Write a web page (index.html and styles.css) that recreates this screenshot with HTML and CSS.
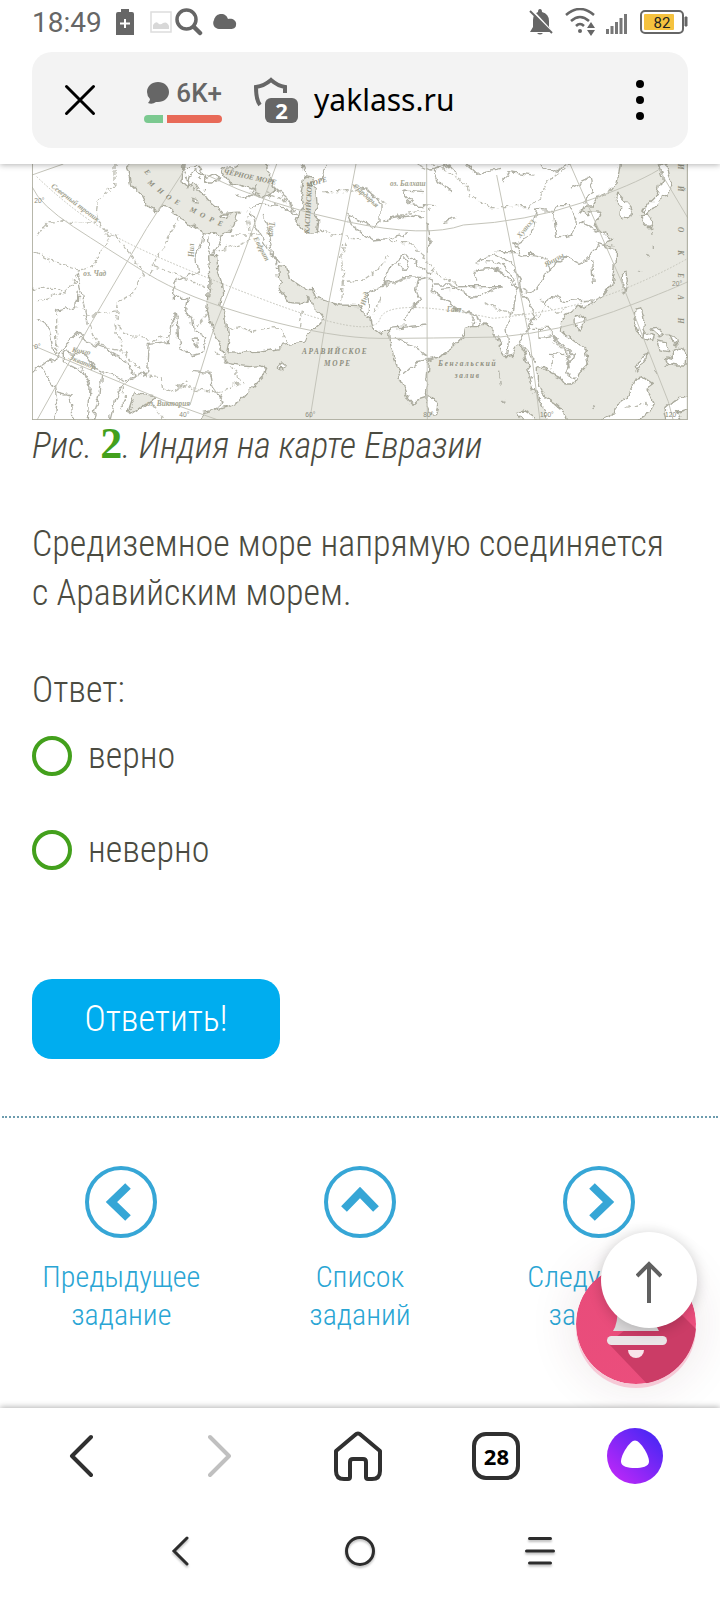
FILE: index.html
```html
<!DOCTYPE html>
<html lang="ru">
<head>
    <meta charset="UTF-8">
    <meta name="viewport" content="width=device-width, initial-scale=1">
    <title>ЯКласс</title>
    <link rel="stylesheet" href="styles.css">
</head>
<body>
    <header class="top">
        <div class="status">
            <span class="time">18:49</span>
            <svg class="st-battery-plus" width="18" height="26" viewBox="0 0 18 26"><path d="M5 0h8v3h3q2 0 2 2v21H0V5q0-2 2-2h3z" fill="#666"/><path d="M9 10v9M4 14.500h10" stroke="#fff" stroke-width="2"/></svg>
            <svg class="st-image" width="22" height="22" viewBox="0 0 22 22"><path d="M1 1h20v20H1z" fill="none" stroke="#ddd" stroke-width="1.500"/><path d="M3 18v-4q3-5 6-1 2 1 4-1 4-2 6 3v3z" fill="#d8d8d8"/></svg>
            <svg class="st-search" width="28" height="28" viewBox="0 0 28 28" fill="none" stroke="#666"><circle cx="11.500" cy="11.500" r="9.500" stroke-width="3.500"/><path d="M19 19l6 6" stroke-width="4.500" stroke-linecap="round"/></svg>
            <svg class="st-cloud" width="24" height="16" viewBox="0 0 24 16"><path d="M6 15a6 6 0 0 1-5-9C2 2 5 0 8 0c4 0 6 2 7 5 5-1 9 2 8 6 0 3-3 4-5 4z" fill="#666"/></svg>
            <span class="spacer"></span>
            <svg width="24" height="26" viewBox="0 0 24 26"><path d="M11 0q2 0 2 3 7 2 7 9v6l3 5H1l3-5v-7q0-6 5-8 0-3 2-3z" fill="#666"/><path d="M8 24h6q-3 3-6 0z" fill="#666"/><path d="M2 0l22 24" stroke="#fff" stroke-width="2"/><path d="M1 2l22 22" stroke="#666" stroke-width="2"/></svg>
            <svg class="st-wifi" width="30" height="28" viewBox="0 0 30 28" fill="none" stroke="#666" stroke-width="2.500"><path d="M1 7q14-12 28 0M6 13q9-8 18 0M11 18q4-4 8 0"/><circle cx="15" cy="23" r="2" fill="#666" stroke="none"/><path d="M26 14l4 6h-8zM26 28l4-6h-8z" fill="#666" stroke="none"/></svg>
            <svg class="st-signal" width="22" height="20" viewBox="0 0 22 20" stroke="#777" stroke-width="3"><path d="M1.500 20v-5M6 20v-8M10.500 20V8M15 20V4M19.500 20V0"/></svg>
            <svg class="st-charge" width="48" height="25" viewBox="0 0 48 25"><rect x="1" y="1" width="42" height="22" rx="4" fill="#fff" stroke="#666" stroke-width="2"/><rect x="4" y="4" width="30" height="16" rx="1" fill="#f5c23e"/><path d="M45 7h2v9h-2z" fill="#666" stroke="#666"/><text x="22" y="18" text-anchor="middle" class="charge-text">82</text></svg>
        </div>
        <div class="address">
            <button class="icon-btn close-btn" aria-label="Закрыть">
                <svg width="32" height="32" viewBox="0 0 32 32"><path d="M2.500 2.500l27 27M29.500 2.500l-27 27" stroke="#000" stroke-width="3" stroke-linecap="round"/></svg>
            </button>
            <button class="icon-btn rating">
                <span class="rating-top">
                    <svg width="22" height="22" viewBox="0 0 22 22"><path d="M11 0C17 0 22 4 22 10s-5 10-11 10H9q-4 3-8 1 2-2 2-4Q0 14 0 10C0 4 5 0 11 0z" fill="#666"/></svg>
                    <span>6K+</span>
                </span>
                <span class="rating-bar"><span class="good"></span><span class="bad"></span></span>
            </button>
            <button class="icon-btn shield">
                <svg width="44" height="46" viewBox="0 0 44 46"><path d="M6 28Q2 23 2 10q8-1 15-7 7 6 14 7v6" fill="none" stroke="#666" stroke-width="4"/></svg>
                <span class="shield-count">2</span>
            </button>
            <a class="url" href="#">yaklass.ru</a>
            <button class="icon-btn more-btn" aria-label="Меню">
                <svg width="8" height="40" viewBox="0 0 8 40"><circle cx="4" cy="4" r="4"/><circle cx="4" cy="20" r="4"/><circle cx="4" cy="36" r="4"/></svg>
            </button>
        </div>
    </header>

    <main class="task">
        <figure class="figure">
            <svg class="map" viewBox="36 27 1968 768" role="img" aria-label="Индия на карте Евразии">
                <defs>
                    <!-- makes the coasts and borders uneven -->
                    <filter id="coast" filterUnits="userSpaceOnUse" x="0" y="0" width="2040" height="830">
                        <feTurbulence type="fractalNoise" baseFrequency="0.035" numOctaves="3" seed="4"/>
                        <feDisplacementMap in="SourceGraphic" scale="26" xChannelSelector="R" yChannelSelector="G"/>
                    </filter>
                </defs>
                <rect x="36" y="27" width="1968" height="768" fill="#fff"/>

                <g filter="url(#coast)">
                <!-- seas -->
                <g class="sea">
                    <path d="M536 820L536 797 552 772 620 757 660 737 696 698 722 674 738 658 742 640 722 632 690 635 660 632 628 625 613 610 610 596 600 570 578 528 562 470 570 390 566 300 590 302 594 350 604 380 608 420 602 452 618 480 626 520 628 550 620 590 660 592 720 588 778 578 782 568 840 560 855 558 860 545 882 525 905 505 910 490 895 470 877 455 873 425 856 435 835 445 806 442 795 425 780 405 784 385 776 370 772 332 800 335 808 372 825 385 850 402 880 404 888 418 885 428 920 440 960 450 1022 452 1030 475 1050 485 1055 515 1085 538 1108 520 1112 570 1128 630 1150 690 1165 730 1180 747 1192 735 1215 728 1220 690 1225 620 1260 605 1290 585 1318 556 1333 542 1336 520 1350 515 1380 515 1395 500 1420 535 1436 555 1445 590 1455 605 1478 600 1485 575 1500 570 1515 600 1525 640 1535 690 1552 725 1570 755 1584 797 1584 820z"/>
                    <path d="M1640 820L1640 797 1630 770 1600 745 1575 730 1560 700 1552 680 1552 632 1570 635 1590 650 1620 665 1640 690 1655 690 1675 655 1705 625 1695 585 1665 560 1630 535 1618 525 1622 500 1640 475 1690 455 1735 435 1770 395 1780 370 1785 340 1787 285 1762 278 1755 262 1775 255 1740 230 1725 200 1742 172 1708 170 1700 182 1684 170 1695 150 1720 150 1740 122 1772 108 1790 85 1797 50 1804 5 2030 5 2030 820z"/>
                    <path d="M322 40L360 5 490 5 486 80 500 95 520 85 540 110 560 120 565 135 610 175 655 172 645 205 625 235 602 245 550 232 510 205 475 185 440 155 422 150 405 170 385 160 365 120 335 90 330 60z"/>
                    <path d="M605 50Q605 34 640 36L680 10 730 10 750 50 748 70 762 100 758 120 740 126 700 110 655 90 620 80z"/>
                    <path d="M850 70Q858 60 880 66L884 80 872 90 888 112 892 160 880 180 896 200 892 236 860 238 845 222 828 200 836 176 850 165 842 120z"/>
                    <path d="M345 712L400 722 395 735 330 778 325 770z"/>
                </g>

                <!-- islands and peninsulas -->
                <g class="land">
                    <path d="M1221 722L1235 725 1256 755 1250 775 1232 778 1222 755z"/>
                    <path d="M1790 118L1800 118 1825 145 1837 175 1822 185 1812 195 1800 180 1802 155 1785 140z"/>
                    <path d="M1915 30L1940 27 1948 60 1962 95 1945 120 1925 125 1918 150 1895 160 1875 178 1866 172 1885 145 1912 118 1918 90 1928 70z"/>
                    <path d="M1862 182L1880 180 1896 200 1888 220 1870 200z"/>
                    <path d="M1808 360L1818 358 1822 380 1815 410 1805 395z"/>
                    <path d="M1662 492L1690 482 1694 505 1678 522 1664 515z"/>
                    <path d="M1848 462L1865 458 1875 485 1872 520 1885 545 1870 555 1855 530 1845 500z"/>
                    <path d="M1876 530L1900 545 1895 562 1876 555zM1895 522L1920 520 1935 535 1915 540zM1908 555L1935 560 1945 590 1920 585zM1945 540L1965 550 1970 570 1950 560z"/>
                    <path d="M1960 590L1982 575 2000 600 1998 630 1970 630 1945 625 1940 605 1960 610z"/>
                    <path d="M1882 585L1878 610 1850 650 1846 640 1868 605z"/>
                    <path d="M1745 820L1745 797 1780 780 1790 750 1825 725 1850 670 1870 665 1900 685 1880 700 1905 745 1890 770 1860 790 1830 820z"/>
                    <path d="M1490 772L1515 768 1560 797 1560 820 1505 797z"/>
                    <path d="M1935 760L1965 735 2030 725 2030 750 1970 770 1990 820 1940 797z"/>
                    <path d="M778 636Q790 624 800 634 794 644 780 640zM600 182l24-3-8 12-14-2z"/>
                    <path d="M488 40L505 75 500 100 510 60 530 50 560 70 580 60 600 70 570 85 555 75 540 40z"/>
                    <path d="M512 130l18 4 4 10-14-2zM530 90l8 8M545 112l6 6M538 70l4 6M552 98l4 6M520 105l6 4"/>
                </g>

                <!-- borders -->
                <g class="border">
                    <path d="M285 27L285 85 235 135 230 170 240 205 85 200 45 250M240 205L270 245 220 330 175 345 100 320 36 285M270 245L290 240 370 355 340 415 295 440 290 480 285 510 340 545 410 555 445 540 470 480M180 480L230 480 290 470M36 400L100 400 130 410 160 385 175 350M60 440L90 430 130 410M110 470L110 600M210 510L230 570 310 590 380 660 420 665 425 700 450 710 500 680M475 190L390 355M405 335L560 395M590 590L670 680 590 715 460 690M560 480L520 525M630 520L660 515 690 530 720 525M285 510L310 600M310 700L310 760M400 750L440 797M590 290L690 255 680 170M630 240L720 240M740 110L790 130 830 170M900 225L950 240 1020 255M975 260L965 330 970 380 1030 375 1080 340 1105 300M970 380L965 440M1060 400L1110 390 1160 370M720 525L780 520 800 560M835 520L845 465M910 110L985 110 1030 100 1100 150M1090 200L1160 175 1230 165M1105 260L1160 260 1210 300 1240 350 1320 395 1440 395M1230 27L1300 60 1340 90 1350 120 1400 155 1530 155 1560 125 1580 80 1650 30M1400 440L1450 470 1510 480 1545 500 1580 450M1560 430L1600 470 1640 460M1080 425L1060 480M1600 560L1650 600 1650 640M1600 600L1590 640M1820 760L1880 745"/>
                </g>

                <!-- rivers and lakes -->
                <g class="river">
                    <path d="M550 232L545 265 530 300 535 350 465 380 460 430 505 430 500 460 515 490 520 530 560 545 550 590 515 600 480 580 475 540 470 480 450 500 445 560 385 565 380 650 310 690 285 730 270 790"/>
                    <path d="M565 245L560 280 575 300 610 245M36 655L80 620 110 610 130 580 175 535 195 560 260 585 330 625 345 665 320 675 230 640 200 600 130 590 130 620 190 650 210 700 205 797M60 640L100 690 110 750 105 797M245 650L240 720 215 797M110 710L150 720 160 797M175 350L180 400 205 510M45 490L90 520 105 600M105 470L170 455 175 410M520 650L570 655 575 690 610 740 580 770"/>
                    <path d="M690 160L720 150 790 155 830 180M690 170L720 240 750 290 780 320M730 180L745 230 750 270 772 325M650 120L680 130 700 115M762 100L800 130 820 170M850 27L865 65M920 27L905 65"/>
                    <path d="M1000 90L1040 100 1080 145 1080 200 1060 215 980 180M980 170L1000 215 1060 255 1110 250 1160 235M1090 195L1180 180 1215 190M1160 105L1150 120 1180 150 1240 155M1160 105L1210 110M1090 395L1110 330 1160 295 1190 330 1240 360M1140 320A14 14 0 1 0 1150 312M1045 475L1045 420 1090 390 1170 365 1230 370 1240 410 1310 460 1370 480 1380 520M1155 500L1160 470 1205 440 1190 400 1195 375 1225 370M1240 390L1290 390 1360 430 1440 395 1320 395 1260 400M1110 520L1220 510M1120 550L1180 575 1220 600M1150 655L1190 620 1250 610"/>
                    <path d="M1365 330Q1400 280 1450 310T1500 400L1545 480 1530 520M1370 345Q1420 325 1460 365T1520 430M1400 320Q1460 320 1490 390M1340 470L1360 485 1355 515M1490 400L1480 470 1460 500 1465 560 1460 600M1530 520L1500 540 1510 580 1550 620M1540 520L1580 520 1620 560 1660 600 1640 650 1660 670"/>
                    <path d="M1430 290L1490 290 1510 300 1485 265 1530 240 1550 165 1600 170 1610 250 1660 240 1670 190 1650 155 1610 155 1600 170M1680 200L1740 230M1510 300Q1580 290 1590 340L1540 415 1510 400M1590 340L1640 305 1680 325 1710 310 1735 260 1780 275M1715 315L1720 390M1570 445L1600 425 1640 440 1720 435M1650 100L1710 70 1720 110 1690 145M1590 595L1650 600M1560 520L1560 550 1600 545 1640 590 1650 640"/>
                    <path d="M1190 27L1230 45 1290 30 1310 60M1240 40L1260 90 1290 110M1340 27L1370 55 1440 40M1450 80L1470 50 1540 60M1560 30L1600 50 1640 30M1380 340l-15 15 5 25M500 70l15 30M1225 205L1230 260 1215 290M1270 200L1310 190M710 85L690 115"/>
                    <path d="M520 560l8-6 6 10-8 8zM618 516l4 2M1828 180l4 4M1895 230l1 10M1894 265l0 14M1890 300l-2 8M1855 350l8-6M1436 650l2 20M1436 685l2 10M1450 735l6 8M1530 655l6 12M1610 665l14 6M1716 755l6 3M1905 655l4 4M1900 650l6 8M1930 640l14-10"/>
                </g>
                </g>

                <!-- graticule -->
                <g class="grid">
                    <path d="M36 60L130 27M36 95Q60 150 160 215T380 355T720 490T1080 550T1440 546Q1620 530 1780 470T2004 380"/>
                    <path d="M490 50L380 220 210 510 50 797M36 570L200 640 440 740 600 797"/>
                    <path d="M770 27L660 325 580 525 510 750M1008 27L975 200 925 450 870 790M1220 27L1222 797"/>
                    <path d="M560 60Q740 150 980 200T1330 210Q1520 200 1680 145T1915 45M1430 60L1530 560 1560 797M1650 27L1800 370 1945 740 1960 797M1915 40L2004 190"/>
                    <path d="M50 65Q160 170 270 235T720 430T1080 492T1420 490Q1620 470 1750 425T2004 310" class="dots"/>
                </g>

                <g class="map-text">
                    <text x="92" y="96" transform="rotate(37 92 96)">Северный тропик</text>
                    <text x="190" y="362">оз. Чад</text>
                    <text x="155" y="590" transform="rotate(10 155 590)">Конго</text>
                    <text x="145" y="612" transform="rotate(22 145 612)">Экватор</text>
                    <text x="380" y="754">оз. Виктория</text>
                    <text x="522" y="306" transform="rotate(-90 522 306)">Нил</text>
                    <text x="700" y="250" transform="rotate(62 700 250)">Евфрат</text>
                    <text x="748" y="200" transform="rotate(90 748 200)">Тигр</text>
                    <text x="998" y="95" transform="rotate(42 998 95)">Сырдарья</text>
                    <text x="1110" y="92">оз. Балхаш</text>
                    <text x="1035" y="452" transform="rotate(-75 1035 452)">Инд</text>
                    <text x="1280" y="472">Ганг</text>
                    <text x="1500" y="250" transform="rotate(-50 1500 250)">Хуанхэ</text>
                    <text x="1578" y="336" transform="rotate(-30 1578 336)">Янцзы</text>
                    <text x="43" y="145" class="deg">20°</text>
                    <text x="43" y="583" class="deg">0°</text>
                    <text x="478" y="786" class="deg">40°</text>
                    <text x="856" y="786" class="deg">60°</text>
                    <text x="1210" y="786" class="deg">80°</text>
                    <text x="1560" y="786" class="deg">100°</text>
                    <text x="1935" y="786" class="deg">120°</text>
                    <text x="1956" y="394" class="deg">20°</text>
                </g>
                <g class="sea-text">
                    <text x="846" y="597" class="wide">АРАВИЙСКОЕ</text>
                    <text x="912" y="634" class="wide">МОРЕ</text>
                    <text x="1255" y="633" class="wide">Бенгальский</text>
                    <text x="1304" y="669" class="wide">залив</text>
                    <text x="610" y="56" transform="rotate(12 610 56)">ЧЁРНОЕ МОРЕ</text>
                    <text x="868" y="236" transform="rotate(-87 868 236)">КАСПИЙСКОЕ</text>
                    <text x="862" y="98" transform="rotate(-18 862 98)">МОРЕ</text>
                    <text transform="translate(372 50) rotate(50)">Е</text>
                    <text transform="translate(382 84) rotate(42)">М</text>
                    <text transform="translate(410 108) rotate(38)">Н</text>
                    <text transform="translate(436 128) rotate(32)">О</text>
                    <text transform="translate(462 144) rotate(28)">Е</text>
                    <text transform="translate(508 168) rotate(24)">М</text>
                    <text transform="translate(538 184) rotate(22)">О</text>
                    <text transform="translate(566 198) rotate(20)">Р</text>
                    <text transform="translate(592 210) rotate(18)">Е</text>
                    <text transform="translate(1974 26) rotate(90)">И</text>
                    <text transform="translate(1974 92) rotate(90)">Й</text>
                    <text transform="translate(1974 216) rotate(90)">О</text>
                    <text transform="translate(1974 286) rotate(90)">К</text>
                    <text transform="translate(1974 354) rotate(90)">Е</text>
                    <text transform="translate(1974 420) rotate(90)">А</text>
                    <text transform="translate(1974 488) rotate(90)">Н</text>
                </g>
                <rect x="37" y="25" width="1965" height="769" fill="none" stroke="#a9a99b" stroke-width="3"/>
            </svg>
            <figcaption>Рис. <span class="num">2</span>. Индия на карте Евразии</figcaption>
        </figure>

        <p class="question">Средиземное море напрямую соединяется с&nbsp;Аравийским морем.</p>

        <form class="answers">
            <p class="answers-title">Ответ:</p>
            <label class="option"><input type="radio" name="answer" value="1"><span>верно</span></label>
            <label class="option"><input type="radio" name="answer" value="0"><span>неверно</span></label>
            <button type="button" class="submit-btn">Ответить!</button>
        </form>
    </main>

    <nav class="task-nav">
        <a href="#">
            <svg width="72" height="72" viewBox="0 0 72 72"><circle cx="36" cy="36" r="34"/><path d="M43 20L26.500 36 43 52"/></svg>
            <span>Предыдущее задание</span>
        </a>
        <a href="#">
            <svg width="72" height="72" viewBox="0 0 72 72"><circle cx="36" cy="36" r="34"/><path d="M20 43L36 26.500 52 43"/></svg>
            <span>Список заданий</span>
        </a>
        <a href="#">
            <svg width="72" height="72" viewBox="0 0 72 72"><circle cx="36" cy="36" r="34"/><path d="M29 20L45.500 36 29 52"/></svg>
            <span>Следующее задание</span>
        </a>
        <button class="bell-btn" aria-label="Уведомления">
            <svg width="120" height="120" viewBox="0 0 120 120">
                <defs>
                    <linearGradient id="pink" x1="0" y1="0" x2="1" y2="1"><stop offset="0" stop-color="#e84c7a"/><stop offset="1" stop-color="#ec4e7d"/></linearGradient>
                    <clipPath id="round"><circle cx="60" cy="60" r="60"/></clipPath>
                </defs>
                <g clip-path="url(#round)">
                    <circle cx="60" cy="60" r="60" fill="url(#pink)"/>
                    <path d="M32 79L75 124 130 124 130 75 90 35z" fill="#cb3c66"/>
                </g>
                <path d="M37 67Q42 60 42 40a18 18 0 0 1 36 0q0 20 5 27z" fill="#dcdadb"/>
                <rect x="31" y="72" width="60" height="9" rx="4.500" fill="#eae5e7"/>
                <path d="M52 86h16a8 8 0 0 1-16 0z" fill="#f8e4ea"/>
            </svg>
        </button>
        <button class="up-btn" aria-label="Наверх">
            <svg width="26" height="42" viewBox="0 0 26 42" fill="none" stroke="#606060" stroke-width="4"><path d="M13 42V3M1 15L13 3l12 12"/></svg>
        </button>
    </nav>

    <footer class="bottom">
        <div class="browser-bar">
            <button class="icon-btn" aria-label="Назад"><svg width="24" height="44" viewBox="0 0 24 44"><path d="M22 3L3 22l19 19" class="line"/></svg></button>
            <button class="icon-btn" aria-label="Вперёд" disabled><svg width="24" height="44" viewBox="0 0 24 44"><path d="M2 3l19 19L2 41" class="line pale"/></svg></button>
            <button class="icon-btn" aria-label="Домой"><svg width="48" height="50" viewBox="0 0 48 50"><path d="M2 20L21 4q3-3 6 0l19 16v20q0 8-8 8h-4q-2 0-2-2V31q0-3-3-3h-10q-3 0-3 3v15q0 2-2 2h-4q-8 0-8-8z" class="line"/></svg></button>
            <button class="icon-btn tabs">28</button>
            <button class="icon-btn" aria-label="Алиса">
                <svg width="56" height="56" viewBox="0 0 56 56">
                    <defs><linearGradient id="alice" x1="0.200" y1="0.900" x2="0.850" y2="0.200"><stop offset="0" stop-color="#b527f8"/><stop offset="1" stop-color="#5227f5"/></linearGradient></defs>
                    <circle cx="28" cy="28" r="28" fill="url(#alice)"/>
                    <path d="M28 12.500c5 0 14 14 14 21 0 5-7 6.500-14 6.500s-14-1.500-14-6.500c0-7 9-21 14-21z" fill="#fff"/>
                </svg>
            </button>
        </div>
        <div class="system-bar">
            <button class="icon-btn" aria-label="Назад"><svg width="18" height="30" viewBox="0 0 18 30"><path d="M16 2L3 15l13 13" class="thin"/></svg></button>
            <button class="icon-btn" aria-label="Главный экран"><svg width="30" height="30" viewBox="0 0 30 30"><circle cx="15" cy="15" r="13.500" class="thin"/></svg></button>
            <button class="icon-btn" aria-label="Недавние"><svg width="30" height="30" viewBox="0 0 30 30"><path d="M4.500 2.500h21M1.500 15h27M4.500 27h21" class="thin"/></svg></button>
        </div>
    </footer>
</body>
</html>
```
FILE: styles.css
```css
* {
    box-sizing: border-box;
}
body {
    margin: 0;
    font-family: "Roboto Condensed", Roboto, "Open Sans", sans-serif;
    font-weight: 300;
    font-size: 36px;
    line-height: 49px;
    color: #4b4b41;
    background: #fff;
}
svg {
    display: block;
    flex: none;
}
p {
    margin: 0;
}
.icon-btn {
    display: flex;
    align-items: center;
    justify-content: center;
    padding: 0;
    border: none;
    background: none;
    cursor: pointer;
}

/* top */
.top {
    position: relative;
    padding-bottom: 16px;
    background: #fff;
    box-shadow: 0 1px 6px rgba(0,0,0,0.3);
}
.status {
    display: flex;
    align-items: center;
    height: 52px;
    padding: 0 32px 8px;
}
.time {
    padding-top: 2px;
    font: 400 28px/32px Roboto, sans-serif;
    color: #666;
}
.st-battery-plus {
    margin-left: 14px;
}
.st-image {
    margin-left: 16px;
}
.st-search {
    margin-left: 3px;
}
.st-cloud {
    margin-left: 10px;
}
.spacer {
    flex: 1;
}
.st-wifi {
    margin-left: 12px;
}
.st-signal {
    margin-left: 11px;
    margin-top: 4px;
}
.st-charge {
    margin-left: 12px;
}
.charge-text {
    font: 400 15px Roboto, sans-serif;
    fill: #222;
}
.address {
    display: flex;
    align-items: center;
    height: 96px;
    margin: 0 32px;
    padding: 0 44px 0 32px;
    border-radius: 20px;
    background: #f3f3f3;
}
.rating {
    flex-direction: column;
    gap: 6px;
    width: 78px;
    margin-left: 48px;
}
.rating-top {
    display: flex;
    align-items: center;
    align-self: flex-end;
    gap: 7px;
    font: 500 26px/32px Roboto, sans-serif;
    color: #666;
}
.rating-bar {
    display: flex;
    gap: 4px;
    width: 100%;
    height: 8px;
}
.good {
    flex: 1;
    border-radius: 4px 0 0 4px;
    background: #7bc990;
}
.bad {
    flex: 3;
    border-radius: 0 4px 4px 0;
    background: #e86a58;
}
.shield {
    position: relative;
    margin-left: 32px;
}
.shield-count {
    position: absolute;
    right: 0;
    bottom: 0;
    width: 33px;
    height: 25px;
    border-radius: 6px;
    background: #666;
    box-shadow: 0 0 0 3px #f3f3f3;
    font: 700 22px/25px "Noto Sans", sans-serif;
    color: #fff;
}
.url {
    flex: 1;
    margin-left: 16px;
    font: 400 30px/40px "Noto Sans", sans-serif;
    color: #000;
    text-decoration: none;
}

/* task */
.task {
    padding: 0 32px 57px;
}
.figure {
    margin: 0 0 49px;
}
.map {
    width: 100%;
    height: auto;
}
.sea path {
    fill: #e8e8e1;
    stroke: #aaaa9d;
    stroke-width: 4;
}
.land path {
    fill: #fff;
    stroke: #aaaa9d;
    stroke-width: 4;
}
.grid path {
    fill: none;
    stroke: #c4c4ba;
    stroke-width: 3;
}
.grid .dots {
    stroke-dasharray: 5 5;
}
.border path {
    fill: none;
    stroke: #bcbcb1;
    stroke-width: 4;
    stroke-dasharray: 13 6;
    stroke-linejoin: round;
}
.river path {
    fill: none;
    stroke: #b0b0a5;
    stroke-width: 4;
    stroke-linejoin: round;
}
.map-text text {
    font: italic 700 22px "Liberation Serif", serif;
    fill: #a2a28e;
}
.map-text .deg {
    font: 400 20px "Liberation Sans", sans-serif;
    fill: #8a8a7b;
}
.sea-text text {
    font: italic 700 22px "Liberation Serif", serif;
    fill: #8e8e7e;
}
.sea-text .wide {
    letter-spacing: 5px;
}
figcaption {
    padding-top: 2px;
    font-style: italic;
}
.num {
    font: 700 44px/40px "Liberation Serif", serif;
    color: #43a01c;
}
.question {
    margin-bottom: 48px;
}
.option {
    display: flex;
    align-items: center;
    gap: 16px;
    height: 94px;
}
.answers-title {
    margin-bottom: -6px;
}
.option input {
    appearance: none;
    width: 40px;
    height: 40px;
    margin: 0;
    border: 4px solid #43a01c;
    border-radius: 50%;
}
.option input:checked {
    background: #43a01c;
    box-shadow: inset 0 0 0 6px #fff;
}
.submit-btn {
    display: block;
    min-width: 248px;
    height: 80px;
    margin-top: 82px;
    border: none;
    border-radius: 20px;
    background: #00adef;
    color: #fff;
    font: inherit;
    cursor: pointer;
}

/* prev / list / next */
.task-nav {
    position: relative;
    display: grid;
    grid-template-columns: repeat(3, 1fr);
    margin: 0 2px;
    padding: 48px 0 74px;
    border-top: 2px dotted #6c9cae;
}
.task-nav a {
    display: flex;
    flex-direction: column;
    align-items: center;
    gap: 20px;
    font-size: 30px;
    line-height: 38px;
    text-align: center;
    text-decoration: none;
    color: #29a5d4;
}
.task-nav a span {
    width: min-content;
}
.task-nav a svg {
    fill: none;
    stroke: #36a6d6;
    stroke-width: 4;
}
.task-nav a path {
    stroke-width: 8;
}
.bell-btn {
    position: absolute;
    right: 22px;
    bottom: 24px;
    padding: 0;
    border: none;
    border-radius: 50%;
    background: none;
    box-shadow: 0 4px 0 #f6c9d6, 0 0 50px rgba(90,30,50,0.12);
    cursor: pointer;
}
.up-btn {
    position: absolute;
    right: 21px;
    bottom: 80px;
    display: flex;
    align-items: center;
    justify-content: center;
    width: 96px;
    height: 96px;
    padding: 4px 0 0;
    border: none;
    border-radius: 50%;
    background: #fff;
    box-shadow: 0 2px 14px rgba(0,0,0,0.2);
    cursor: pointer;
}

/* bottom bars */
.bottom {
    position: relative;
    background: #fff;
    box-shadow: 0 -1px 6px rgba(0,0,0,0.3);
}
.browser-bar {
    display: grid;
    grid-template-columns: repeat(5, 1fr);
    align-items: center;
    height: 95px;
    padding: 0 16px 0 12px;
}
.tabs {
    justify-self: center;
    width: 48px;
    height: 48px;
    border: 4px solid #303030;
    border-radius: 14px;
    font: 700 22px/40px "Noto Sans", sans-serif;
    color: #000;
}
.line {
    fill: none;
    stroke: #303030;
    stroke-width: 4;
    stroke-linecap: round;
    stroke-linejoin: round;
}
.pale {
    stroke: #c0c0c0;
}
.system-bar {
    display: grid;
    grid-template-columns: repeat(3, 1fr);
    align-items: center;
    height: 96px;
    padding: 0 12.5%;
}
.system-bar svg {
    filter: drop-shadow(0 2px 1px rgba(0,0,0,0.25));
}
.thin {
    fill: none;
    stroke: #2c2c2c;
    stroke-width: 3;
    stroke-linecap: round;
}
```
